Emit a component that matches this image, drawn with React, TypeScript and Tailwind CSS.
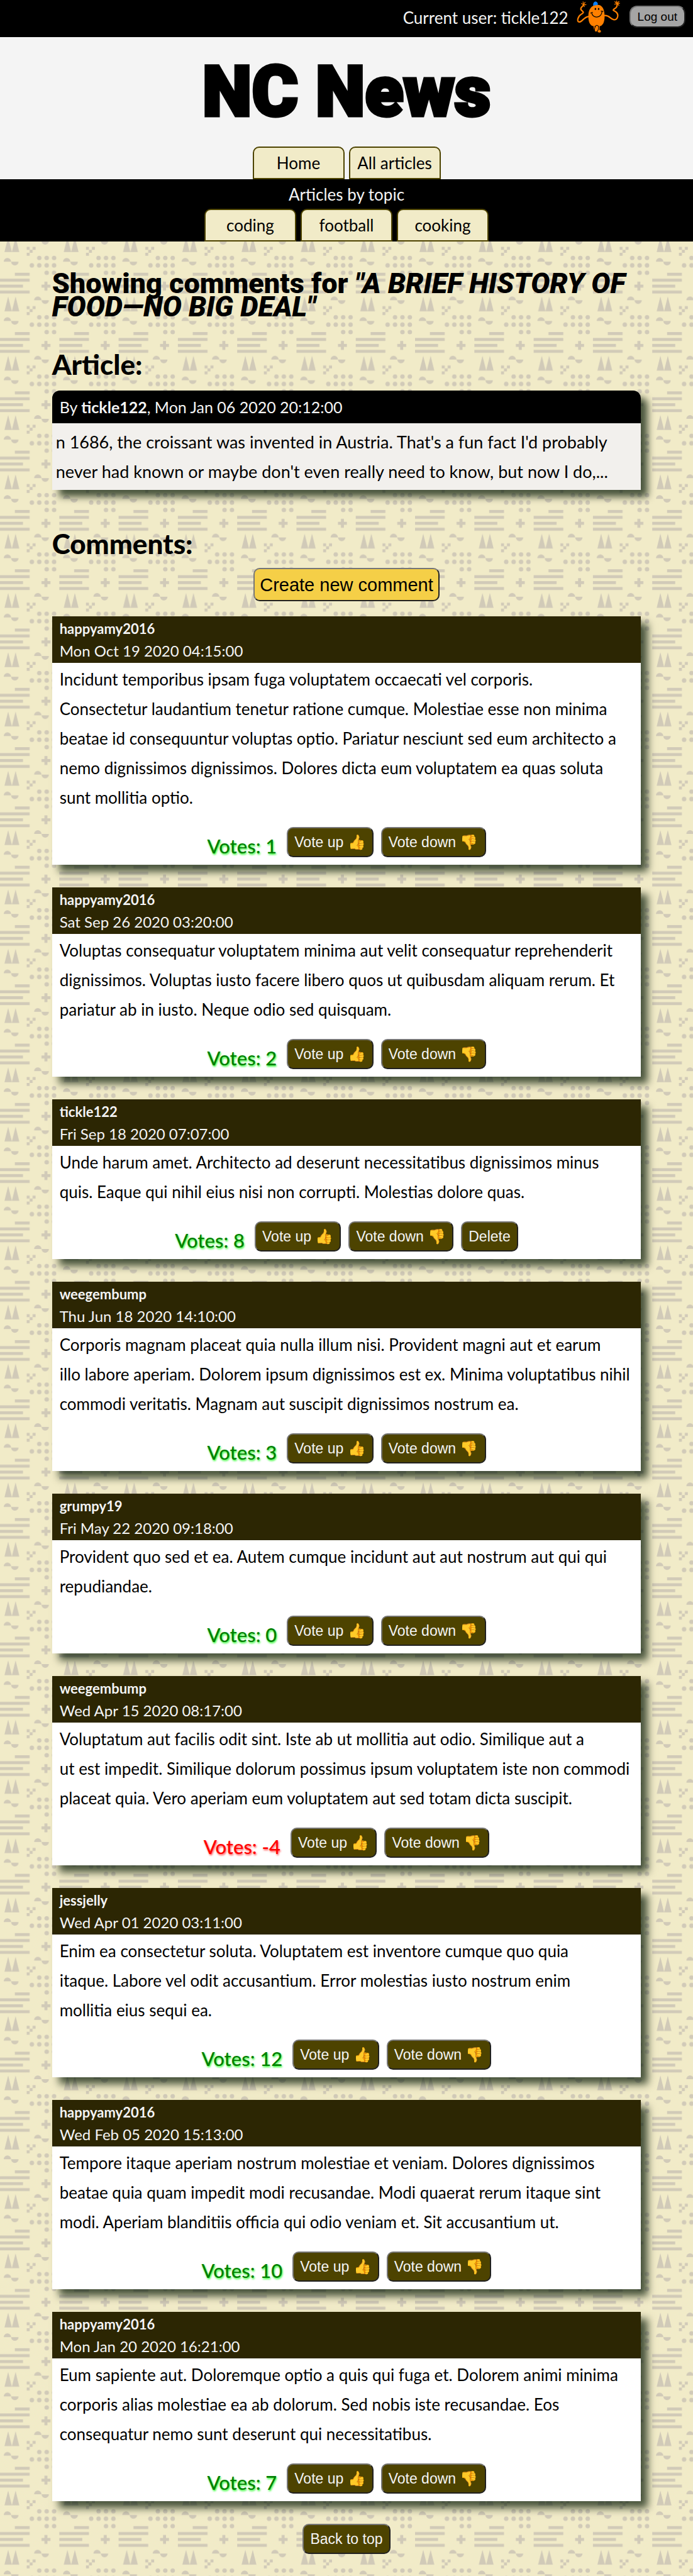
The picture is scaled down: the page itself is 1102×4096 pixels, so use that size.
import type { ReactNode } from "react";

type Comment = {
  id: number;
  author: string;
  date: string;
  lines: string[];
  votes: number;
  own?: boolean;
};

const comments: Comment[] = [
  {
    id: 1,
    author: "happyamy2016",
    date: "Mon Oct 19 2020 04:15:00",
    lines: [
      "Incidunt temporibus ipsam fuga voluptatem occaecati vel corporis.",
      "Consectetur laudantium tenetur ratione cumque. Molestiae esse non minima",
      "beatae id consequuntur voluptas optio. Pariatur nesciunt sed eum architecto a",
      "nemo dignissimos dignissimos. Dolores dicta eum voluptatem ea quas soluta",
      "sunt mollitia optio.",
    ],
    votes: 1,
  },
  {
    id: 2,
    author: "happyamy2016",
    date: "Sat Sep 26 2020 03:20:00",
    lines: [
      "Voluptas consequatur voluptatem minima aut velit consequatur reprehenderit",
      "dignissimos. Voluptas iusto facere libero quos ut quibusdam aliquam rerum. Et",
      "pariatur ab in iusto. Neque odio sed quisquam.",
    ],
    votes: 2,
  },
  {
    id: 3,
    author: "tickle122",
    date: "Fri Sep 18 2020 07:07:00",
    lines: [
      "Unde harum amet. Architecto ad deserunt necessitatibus dignissimos minus",
      "quis. Eaque qui nihil eius nisi non corrupti. Molestias dolore quas.",
    ],
    votes: 8,
    own: true,
  },
  {
    id: 4,
    author: "weegembump",
    date: "Thu Jun 18 2020 14:10:00",
    lines: [
      "Corporis magnam placeat quia nulla illum nisi. Provident magni aut et earum",
      "illo labore aperiam. Dolorem ipsum dignissimos est ex. Minima voluptatibus nihil",
      "commodi veritatis. Magnam aut suscipit dignissimos nostrum ea.",
    ],
    votes: 3,
  },
  {
    id: 5,
    author: "grumpy19",
    date: "Fri May 22 2020 09:18:00",
    lines: [
      "Provident quo sed et ea. Autem cumque incidunt aut aut nostrum aut qui qui",
      "repudiandae.",
    ],
    votes: 0,
  },
  {
    id: 6,
    author: "weegembump",
    date: "Wed Apr 15 2020 08:17:00",
    lines: [
      "Voluptatum aut facilis odit sint. Iste ab ut mollitia aut odio. Similique aut a",
      "ut est impedit. Similique dolorum possimus ipsum voluptatem iste non commodi",
      "placeat quia. Vero aperiam eum voluptatem aut sed totam dicta suscipit.",
    ],
    votes: -4,
  },
  {
    id: 7,
    author: "jessjelly",
    date: "Wed Apr 01 2020 03:11:00",
    lines: [
      "Enim ea consectetur soluta. Voluptatem est inventore cumque quo quia",
      "itaque. Labore vel odit accusantium. Error molestias iusto nostrum enim",
      "mollitia eius sequi ea.",
    ],
    votes: 12,
  },
  {
    id: 8,
    author: "happyamy2016",
    date: "Wed Feb 05 2020 15:13:00",
    lines: [
      "Tempore itaque aperiam nostrum molestiae et veniam. Dolores dignissimos",
      "beatae quia quam impedit modi recusandae. Modi quaerat rerum itaque sint",
      "modi. Aperiam blanditiis officia qui odio veniam et. Sit accusantium ut.",
    ],
    votes: 10,
  },
  {
    id: 9,
    author: "happyamy2016",
    date: "Mon Jan 20 2020 16:21:00",
    lines: [
      "Eum sapiente aut. Doloremque optio a quis qui fuga et. Dolorem animi minima",
      "corporis alias molestiae ea ab dolorum. Sed nobis iste recusandae. Eos",
      "consequatur nemo sunt deserunt qui necessitatibus.",
    ],
    votes: 7,
  },
];

function Backdrop() {
  return (
    <svg className="absolute inset-0 h-full w-full" aria-hidden="true">
      <defs>
        <pattern id="temple" width="160" height="160" patternUnits="userSpaceOnUse" patternTransform="scale(0.5893)">
          <g fill="#d1cab8">
            <path d="M22 0L32 40H12zM42 0L52 40H32z" />
            <path d="M92 10a10 10 0 0 1 20 0a10 10 0 0 0 20 0z" />
            <path d="M10 66a10 10 0 0 1 20 0a10 10 0 0 0 20 0z" />
            <path d="M72 26h8v8h8v-8h8v8h-8v8h-8v8h-8v-8h8v-8h-8z" />
            <path d="M40 96h40v8H40zM0 112h80v8H0zM0 128h62v8H0zM0 144h80v8H0z" />
            <path d="M120 120h8v8h8v8h-8v8h-8v-8h-8v-8h8z" />
            <circle cx="106" cy="56" r="6" />
            <circle cx="126" cy="56" r="6" />
            <circle cx="146" cy="56" r="6" />
            <circle cx="86" cy="76" r="6" />
            <circle cx="106" cy="76" r="6" />
            <circle cx="126" cy="76" r="6" />
            <circle cx="146" cy="76" r="6" />
            <circle cx="126" cy="96" r="6" />
            <circle cx="146" cy="96" r="6" />
          </g>
        </pattern>
      </defs>
      <rect width="100%" height="100%" fill="url(#temple)" />
    </svg>
  );
}

function Avatar() {
  return (
    <svg viewBox="0 0 380 270" className="h-[53px] w-[75px]" role="img" aria-label="tickle122 avatar">
      <g fill="none" stroke="#ff8000" strokeLinecap="round" strokeLinejoin="round">
        <path strokeWidth="11" d="M98 134C62 138 48 180 24 178C0 174 18 130 38 118C66 100 62 100 42 82C30 68 44 58 60 42" />
        <path strokeWidth="11" d="M230 126C270 122 276 156 306 160C338 160 346 120 326 100C308 84 290 86 306 74C328 60 332 54 332 34" />
        <path strokeWidth="6" d="M60 40L44 28M60 40L56 14M60 40L72 18M60 40L80 38M60 40L66 54" />
        <path strokeWidth="7" d="M332 30L314 14M332 30L328 8M332 30L346 12M332 30L352 26M332 30L346 42M332 30L312 34" />
      </g>
      <path fill="#ff8000" d="M165 40C205 34 228 66 230 120C232 160 226 200 196 212H136C106 204 98 166 99 124C101 72 126 44 165 40z" />
      <path fill="#0a80ff" d="M138 44C136 22 148 10 160 13C172 16 178 28 175 40C162 42 150 44 138 47z" />
      <ellipse cx="156" cy="73" rx="6" ry="9" fill="#000" />
      <ellipse cx="182" cy="73" rx="6" ry="9" fill="#000" />
      <path d="M118 106L132 100M126 104C132 150 202 152 210 92M202 90L217 92" fill="none" stroke="#000" strokeWidth="6" strokeLinecap="round" />
      <path d="M144 210L150 240M186 210L184 240" stroke="#ff8000" strokeWidth="9" />
      <ellipse cx="186" cy="252" rx="15" ry="11" fill="#ff8000" transform="rotate(20 186 252)" />
      <ellipse cx="165" cy="232" rx="15" ry="27" fill="#ff8000" stroke="#000" strokeWidth="5" transform="rotate(15 165 232)" />
    </svg>
  );
}

const bevel =
  "border-2 border-t-[#767676] border-l-[#767676] border-r-[#212121] border-b-[#212121] font-['Liberation_Sans',sans-serif]";

function DarkButton({ children }: { children: ReactNode }) {
  return (
    <button
      type="button"
      className={`${bevel} flex h-12 items-center whitespace-pre rounded-[10px] bg-[#4d4300] px-2.5 text-[23px] leading-7 text-[#f4f4f4]`}
    >
      {children}
    </button>
  );
}

function Tab({ children }: { children: ReactNode }) {
  return (
    <a
      href="#"
      className="flex h-[52px] w-[146px] items-center justify-center rounded-t-[10px] border-2 border-[#4d4300] bg-[#f1ebc8] text-[26px] text-black"
    >
      {children}
    </a>
  );
}

function CommentCard({ comment }: { comment: Comment }) {
  const tone =
    comment.votes < 0
      ? "text-[#ff0000] [text-shadow:1px_2px_3px_#ff5555]"
      : "text-[#008000] [text-shadow:1px_2px_3px_#33ff33]";
  return (
    <li className="bg-white shadow-[11px_11px_12px_rgba(0,20,0,0.7)]">
      <header className="h-[74px] bg-[#2c2603] px-3 pt-0.5 text-2xl leading-[35px] text-[#f4f4f4]">
        <h3 className="text-[22px] font-bold">{comment.author}</h3>
        <time>{comment.date}</time>
      </header>
      <p className="px-3 pt-[3px] text-[26px] leading-[47px] whitespace-nowrap">
        {comment.lines.map((line) => (
          <span key={line} className="block">
            {line}
          </span>
        ))}
      </p>
      <div className="flex justify-center gap-3 pt-[23px] pb-3">
        <span className={`${tone} mr-1 pt-3 text-[31px] leading-9 font-medium`}>Votes: {comment.votes}</span>
        <DarkButton>Vote up 👍</DarkButton>
        <DarkButton>Vote down 👎</DarkButton>
        {comment.own && <DarkButton>Delete</DarkButton>}
      </div>
    </li>
  );
}

export default function App() {
  return (
    <div className="relative bg-[#f1ebc8] font-[Lato,sans-serif] text-black">
      <Backdrop />
      <div className="relative">
        <div className="flex h-[59px] items-start justify-end bg-black pr-3 text-[#f4f4f4]">
          <p className="mr-3 pt-2.5 text-[26px] leading-9">Current user: tickle122</p>
          <Avatar />
          <button
            type="button"
            className={`${bevel} mt-[9px] ml-2.5 h-[35px] rounded-[12px] bg-[#a5a5a5] px-[11px] text-[19px] leading-7 text-black`}
          >
            Log out
          </button>
        </div>
        <header className="flex flex-col items-center bg-[#f4f4f4]">
          <h1 className="flex h-[174px] items-center font-[Roboto,sans-serif] text-[112px] leading-none font-black [-webkit-text-stroke:5px_black]">
            NC News
          </h1>
          <nav className="flex gap-[7px]">
            <Tab>Home</Tab>
            <Tab>All articles</Tab>
          </nav>
        </header>
        <nav className="flex flex-col items-center bg-black" aria-labelledby="topics">
          <h2 id="topics" className="pt-1.5 pb-[5px] text-[26px] leading-9 text-[#f4f4f4]">
            Articles by topic
          </h2>
          <div className="flex gap-[7px]">
            <Tab>coding</Tab>
            <Tab>football</Tab>
            <Tab>cooking</Tab>
          </div>
        </nav>
        <main className="mx-auto w-[85%] pb-9">
          <h2 className="pt-12 font-[Roboto,sans-serif] text-[45px] leading-[37px] font-black">
            Showing comments for{" "}
            <em>
              "A BRIEF HISTORY OF
              <br />
              FOOD—NO BIG DEAL"
            </em>
          </h2>
          <h2 className="pt-12 text-[44px] leading-[50px] font-black">Article:</h2>
          <article className="mt-[17px] rounded-t-[12px] bg-[#f2f0ed] shadow-[11px_11px_12px_rgba(0,20,0,0.7)]">
            <header className="rounded-t-[12px] bg-black px-3 text-[25px] leading-[52px] text-[#f4f4f4]">
              By <b>tickle122</b>, Mon Jan 06 2020 20:12:00
            </header>
            <p className="px-1.5 py-1.5 text-[27px] leading-[47px] whitespace-nowrap">
              n 1686, the croissant was invented in Austria. That's a fun fact I'd probably
              <br />
              never had known or maybe don't even really need to know, but now I do,...
            </p>
          </article>
          <h2 className="pt-[60px] text-[44px] leading-[50px] font-black">Comments:</h2>
          <div className="flex justify-center pt-[14px] pb-6">
            <button
              type="button"
              className={`${bevel} h-[53px] rounded-[10px] bg-[#f5cf47] px-2 text-[29px] leading-9 text-black`}
            >
              Create new comment
            </button>
          </div>
          <ul className="flex flex-col gap-9">
            {comments.map((comment) => (
              <CommentCard key={comment.id} comment={comment} />
            ))}
          </ul>
          <div className="flex justify-center pt-9">
            <DarkButton>Back to top</DarkButton>
          </div>
        </main>
      </div>
    </div>
  );
}
